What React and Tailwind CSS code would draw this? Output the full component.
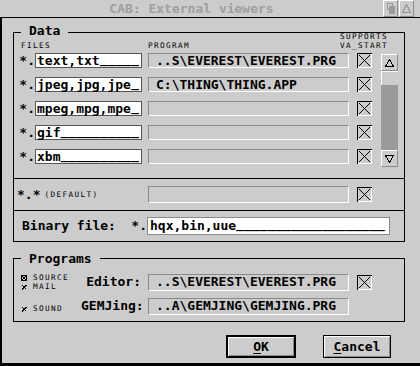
import React from "react";

const BIG = "font-['DejaVu_Sans_Mono',monospace] font-bold text-[13px] leading-[16px] whitespace-pre";
const SMALL = "font-['DejaVu_Sans_Mono',monospace] text-[7.7px] leading-[9px] tracking-[1.36px] whitespace-pre";

function U({ s }) {
  const m = s.match(/^(.*?)(_*)$/);
  return (
    <>
      {m[1]}
      {m[2] ? <span className="relative top-[-2px]">{m[2]}</span> : null}
    </>
  );
}

function Check() {
  return (
    <svg width="15" height="15" viewBox="0 0 15 15" className="block shrink-0" shapeRendering="crispEdges">
      <path d="M0.5 14.5V0.5H14.5" stroke="#000" fill="none" />
      <path d="M14.5 1V14.5H1" stroke="#fff" fill="none" />
      <path d="M2 2L13 13M13 2L2 13" stroke="#000" fill="none" />
    </svg>
  );
}

function BoxX() {
  return (
    <svg width="6" height="6" viewBox="0 0 6 6" className="block shrink-0" shapeRendering="crispEdges">
      <rect x="0.5" y="0.5" width="5" height="5" stroke="#000" fill="none" />
      <path d="M1 1L5 5M5 1L1 5" stroke="#000" fill="none" />
    </svg>
  );
}

function SmallX() {
  return (
    <svg width="6" height="6" viewBox="0 0 6 6" className="block shrink-0" shapeRendering="crispEdges">
      <path d="M1 1L5.5 5.5M5.5 1L1 5.5" stroke="#000" fill="none" />
    </svg>
  );
}

function ProgField({ text }) {
  return (
    <div className={`w-[201px] h-[15px] shrink-0 border border-t-[#8a8a8a] border-l-[#8a8a8a] border-r-white border-b-white pl-[7px] flex items-center ${BIG}`}>
      {text}
    </div>
  );
}

function ProgField17({ text }) {
  return (
    <div className={`w-[201px] h-[17px] shrink-0 border border-t-[#8a8a8a] border-l-[#8a8a8a] border-r-white border-b-white pl-[7px] flex items-center ${BIG}`}>
      {text}
    </div>
  );
}

const rows = [
  { ext: "text,txt_____", prog: "..S\\EVEREST\\EVEREST.PRG" },
  { ext: "jpeg,jpg,jpe_", prog: "C:\\THING\\THING.APP" },
  { ext: "mpeg,mpg,mpe_", prog: "" },
  { ext: "gif__________", prog: "" },
  { ext: "xbm__________", prog: "" },
];

function ScrollBtn({ down }) {
  return (
    <div className="h-[17px] shrink-0 border border-t-white border-l-white border-r-[#8a8a8a] border-b-[#8a8a8a] flex items-center justify-center">
      <svg width="9" height="8" viewBox="0 0 9 8" className="block" shapeRendering="crispEdges">
        {down ? (
          <path d="M0.5 0.5H8.5L4.5 7.5Z" stroke="#000" fill="none" />
        ) : (
          <path d="M4.5 0.5L8.5 7.5H0.5Z" stroke="#000" fill="none" />
        )}
      </svg>
    </div>
  );
}

export default function App() {
  return (
    <div className="w-[420px] h-[366px] bg-[#cccccc] overflow-hidden flex flex-col text-black">
      {/* Title bar */}
      <div className="h-[18px] shrink-0 border-b border-black flex">
        <div className={`w-[383px] flex items-center justify-center text-[#9f9f9f] ${BIG}`}>CAB: External viewers</div>
        <div className="w-[15px] h-[17px] border border-t-white border-l-white border-r-[#8a8a8a] border-b-[#8a8a8a] flex items-center justify-center">
          <svg width="8" height="11" viewBox="0 0 8 11" className="block" shapeRendering="crispEdges">
            <rect x="0.5" y="0.5" width="5" height="6" stroke="#9a9a9a" fill="none" />
            <rect x="2" y="3" width="6" height="8" fill="#9a9a9a" />
          </svg>
        </div>
        <div className="w-[15px] h-[17px] ml-[1px] border border-t-white border-l-white border-r-[#8a8a8a] border-b-[#8a8a8a] flex items-center justify-center">
          <svg width="9" height="9" viewBox="0 0 9 9" className="block" shapeRendering="crispEdges">
            <path d="M4.5 0.5L8.5 8.5H0.5Z" stroke="#9a9a9a" fill="none" />
          </svg>
        </div>
      </div>

      {/* Body */}
      <div className="flex-1 border-l-2 border-b-[3px] border-black flex flex-col">
        <div className="ml-[11px] mt-[14px] w-[392px] flex flex-col">
          {/* Data box */}
          <div className="relative border border-black">
            <div className={`absolute left-[7px] top-[-10px] px-[8px] bg-[#cccccc] ${BIG}`}>Data</div>
            <div className="h-[20px] flex items-end pl-[7px] pb-[3px]">
              <span className={`${SMALL} w-[127px]`}>FILES</span>
              <span className={`${SMALL} w-[192px]`}>PROGRAM</span>
              <span className={`${SMALL} flex flex-col`}>
                <span>SUPPORTS</span>
                <span>VA_START</span>
              </span>
            </div>
            <div className="flex pb-[11px]">
              <div className="flex flex-col gap-[9px]">
                {rows.map((r, i) => (
                  <div key={i} className="flex items-center h-[15px]">
                    <span className={`w-[21px] text-right ${BIG}`}>*.</span>
                    <div className={`w-[107px] h-[15px] bg-white border border-[#555555] pl-[1px] flex items-center ${BIG}`}>
                      <U s={r.ext} />
                    </div>
                    <div className="w-[6px]" />
                    <ProgField text={r.prog} />
                    <div className="ml-[8px]">
                      <Check />
                    </div>
                  </div>
                ))}
              </div>
              <div className="ml-[9px] mt-[1px] w-[17px] h-[113px] flex flex-col">
                <ScrollBtn />
                <div className="flex-1 bg-[#9a9a9a] flex flex-col">
                  <div className="h-[14px] bg-[#cccccc] border-t border-l border-white" />
                </div>
                <ScrollBtn down />
              </div>
            </div>
          </div>

          {/* Default row */}
          <div className="h-[32px] border-x border-b border-black flex items-center">
            <div className="w-[134px] flex items-center">
              <span className={`pl-[3px] ${BIG}`}>*.*</span>
              <span className={`ml-[4px] ${SMALL}`}>(DEFAULT)</span>
            </div>
            <ProgField17 text="" />
            <div className="ml-[8px]">
              <Check />
            </div>
          </div>

          {/* Binary row */}
          <div className="h-[31px] border-x border-b border-black flex items-center">
            <div className="w-[133px] flex items-center">
              <span className={`pl-[8px] ${BIG}`}>Binary file:</span>
              <span className={`ml-auto ${BIG}`}>*.</span>
            </div>
            <div className={`w-[243px] h-[18px] bg-white border border-[#8a8a8a] pl-[2px] flex items-center ${BIG}`}>
              <U s="hqx,bin,uue___________________" />
            </div>
          </div>

          {/* Programs box */}
          <div className="relative mt-[16px] border border-black pt-[15px] pb-[7px] flex flex-col gap-[8px]">
            <div className={`absolute left-[7px] top-[-8px] px-[8px] bg-[#cccccc] ${BIG}`}>Programs</div>
            <div className="flex items-center h-[16px]">
              <div className="w-[67px] pl-[7px] flex flex-col">
                <div className={`flex items-center ${SMALL}`}>
                  <BoxX />
                  <span className="ml-[6px]">SOURCE</span>
                </div>
                <div className={`flex items-center ${SMALL}`}>
                  <SmallX />
                  <span className="ml-[6px]">MAIL</span>
                </div>
              </div>
              <span className={`w-[60px] text-right ${BIG}`}>Editor:</span>
              <div className="ml-[7px]">
                <ProgField17 text={"..S\\EVEREST\\EVEREST.PRG"} />
              </div>
              <div className="ml-[8px]">
                <Check />
              </div>
            </div>
            <div className="flex items-center h-[16px]">
              <div className="w-[67px] pl-[7px] flex flex-col mt-[5px]">
                <div className={`flex items-center ${SMALL}`}>
                  <SmallX />
                  <span className="ml-[6px]">SOUND</span>
                </div>
              </div>
              <span className={`w-[60px] text-right ${BIG}`}>GEMJing:</span>
              <div className="ml-[7px]">
                <ProgField17 text={"..A\\GEMJING\\GEMJING.PRG"} />
              </div>
            </div>
          </div>
        </div>

        {/* Buttons */}
        <div className="mt-[13px] flex pl-[224px] gap-[27px]">
          <div className={`w-[70px] h-[23px] border-2 border-black shadow-[inset_1px_1px_0_#fff,inset_-1px_-1px_0_#8a8a8a] flex items-center justify-center ${BIG}`}>
            <span className="underline decoration-1 underline-offset-[2px]">O</span>K
          </div>
          <div className={`w-[68px] h-[23px] border border-black shadow-[inset_1px_1px_0_#fff,inset_-1px_-1px_0_#8a8a8a] flex items-center justify-center ${BIG}`}>
            <span className="underline decoration-1 underline-offset-[2px]">C</span>ancel
          </div>
        </div>
      </div>
    </div>
  );
}
